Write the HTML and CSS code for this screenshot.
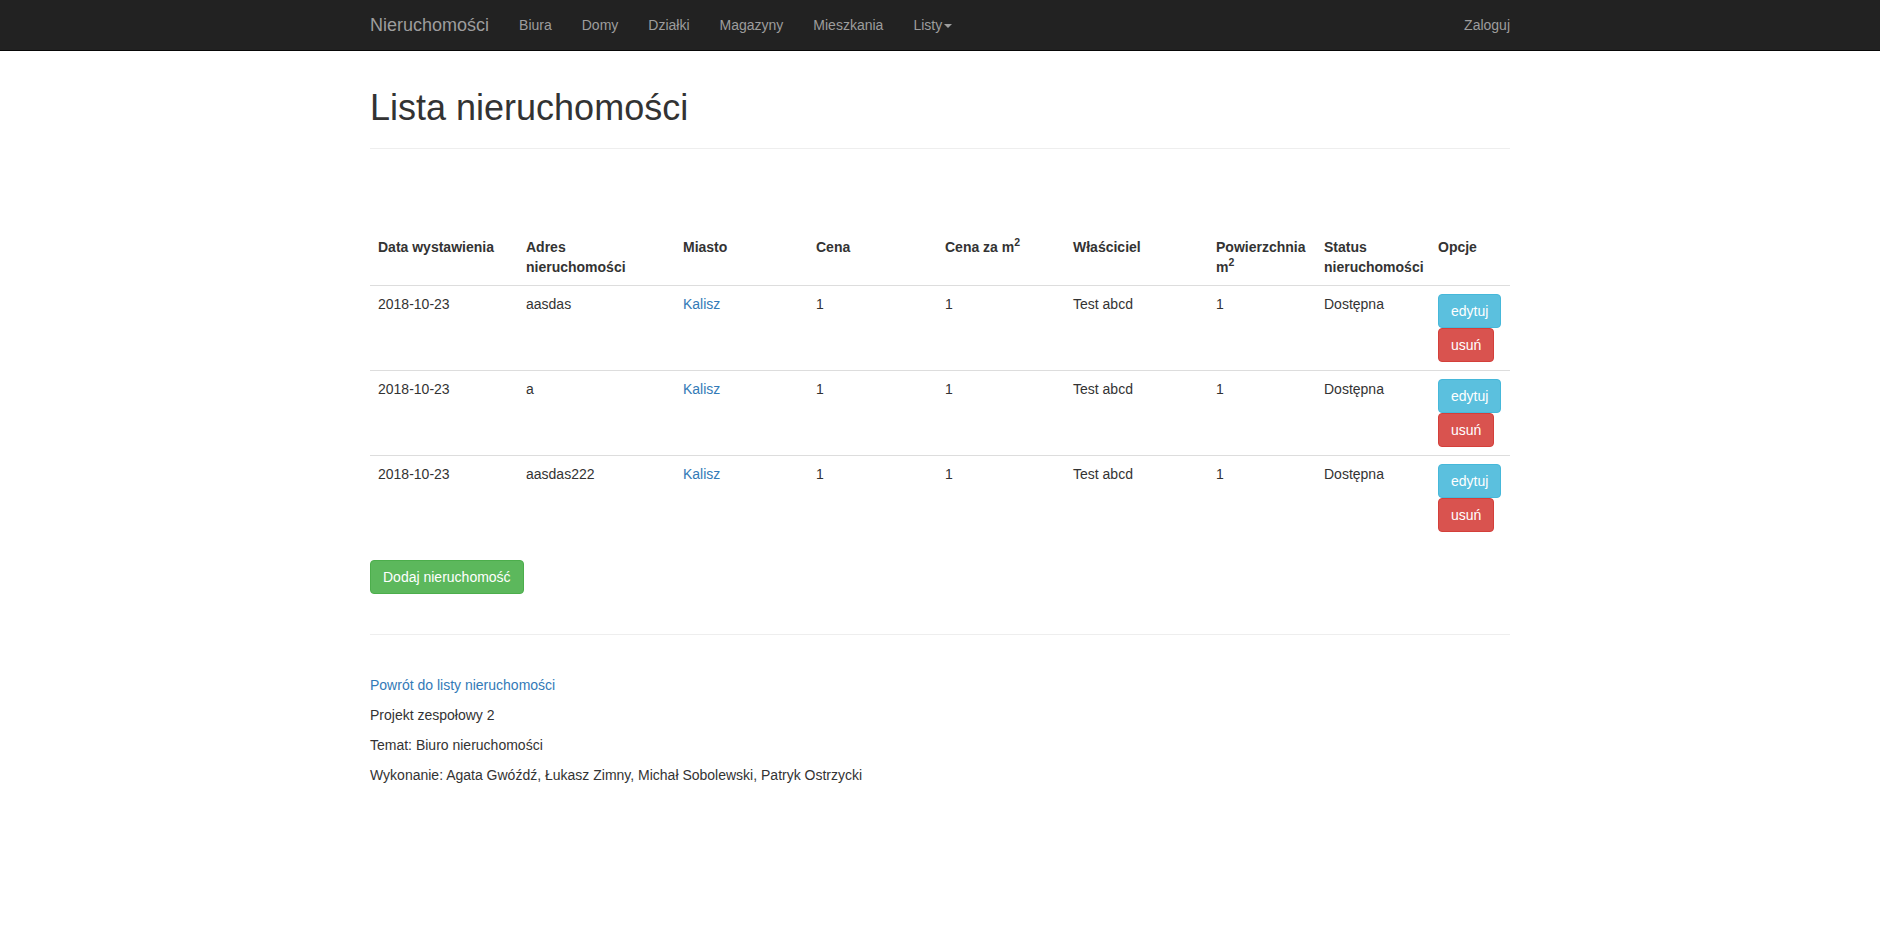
FILE: index.html
```html
<!DOCTYPE html>
<html lang="pl">
<head>
<meta charset="utf-8">
<title>Lista nieruchomości</title>
<link rel="stylesheet" href="styles.css">
</head>
<body>
<nav class="navbar">
  <div class="container nav-inner">
    <div class="nav-left">
      <a class="brand" href="#">Nieruchomości</a>
      <ul class="nav">
        <li><a href="#">Biura</a></li>
        <li><a href="#">Domy</a></li>
        <li><a href="#">Działki</a></li>
        <li><a href="#">Magazyny</a></li>
        <li><a href="#">Mieszkania</a></li>
        <li><a href="#">Listy<span class="caret"></span></a></li>
      </ul>
    </div>
    <ul class="nav nav-right">
      <li><a href="#">Zaloguj</a></li>
    </ul>
  </div>
</nav>

<main class="container body-content">
  <h1>Lista nieruchomości</h1>
  <hr class="rule">

  <table class="table">
    <colgroup>
      <col class="w-date"><col class="w-addr"><col class="w-city"><col class="w-price"><col class="w-pm2"><col class="w-owner"><col class="w-area"><col class="w-status"><col class="w-opts">
    </colgroup>
    <thead>
      <tr>
        <th>Data wystawienia</th>
        <th>Adres nieruchomości</th>
        <th>Miasto</th>
        <th>Cena</th>
        <th>Cena za m<sup>2</sup></th>
        <th>Właściciel</th>
        <th>Powierzchnia m<sup>2</sup></th>
        <th>Status nieruchomości</th>
        <th>Opcje</th>
      </tr>
    </thead>
    <tbody>
      <tr>
        <td>2018-10-23</td>
        <td>aasdas</td>
        <td><a href="#">Kalisz</a></td>
        <td>1</td>
        <td>1</td>
        <td>Test abcd</td>
        <td>1</td>
        <td>Dostępna</td>
        <td><div class="opts"><a class="btn btn-info" href="#">edytuj</a><a class="btn btn-danger" href="#">usuń</a></div></td>
      </tr>
      <tr>
        <td>2018-10-23</td>
        <td>a</td>
        <td><a href="#">Kalisz</a></td>
        <td>1</td>
        <td>1</td>
        <td>Test abcd</td>
        <td>1</td>
        <td>Dostępna</td>
        <td><div class="opts"><a class="btn btn-info" href="#">edytuj</a><a class="btn btn-danger" href="#">usuń</a></div></td>
      </tr>
      <tr>
        <td>2018-10-23</td>
        <td>aasdas222</td>
        <td><a href="#">Kalisz</a></td>
        <td>1</td>
        <td>1</td>
        <td>Test abcd</td>
        <td>1</td>
        <td>Dostępna</td>
        <td><div class="opts"><a class="btn btn-info" href="#">edytuj</a><a class="btn btn-danger" href="#">usuń</a></div></td>
      </tr>
    </tbody>
  </table>

  <div class="actions">
    <a class="btn btn-success" href="#">Dodaj nieruchomość</a>
  </div>

  <hr class="rule footer-rule">

  <footer class="footer">
    <p><a href="#">Powrót do listy nieruchomości</a></p>
    <p>Projekt zespołowy 2</p>
    <p>Temat: Biuro nieruchomości</p>
    <p>Wykonanie: Agata Gwóźdź, Łukasz Zimny, Michał Sobolewski, Patryk Ostrzycki</p>
  </footer>
</main>
</body>
</html>
```

FILE: styles.css
```css
* { box-sizing: border-box; }

html, body { margin: 0; padding: 0; }

body {
  font-family: "Liberation Sans", Arial, Helvetica, sans-serif;
  font-size: 14px;
  line-height: 1.42857143;
  color: #333;
  background: #fff;
}

a { color: #337ab7; text-decoration: none; }

.container {
  width: 1170px;
  margin: 0 auto;
  padding: 0 15px;
}

/* navbar */
.navbar {
  background: #222;
  border-bottom: 1px solid #080808;
  height: 51px;
}
.nav-inner {
  display: flex;
  justify-content: space-between;
  height: 50px;
}
.nav-left { display: flex; margin-left: -15px; }
.brand {
  display: block;
  padding: 15px;
  font-size: 18px;
  line-height: 20px;
  height: 50px;
  color: #9d9d9d;
}
.nav {
  display: flex;
  list-style: none;
  margin: 0;
  padding: 0;
}
.nav a {
  display: block;
  padding: 15px;
  line-height: 20px;
  color: #9d9d9d;
}
.nav-right { margin-right: -15px; }
.caret {
  display: inline-block;
  width: 0;
  height: 0;
  margin-left: 2px;
  vertical-align: middle;
  border-top: 4px solid #9d9d9d;
  border-right: 4px solid transparent;
  border-left: 4px solid transparent;
}

/* content */
.body-content { padding-top: 17px; }

h1 {
  font-size: 36px;
  font-weight: 500;
  line-height: 1.1;
  margin: 20px 0 10px;
  color: #333;
}

.rule {
  margin: 20px 0;
  border: 0;
  border-top: 1px solid #eee;
  height: 0;
}

.table {
  width: 100%;
  table-layout: fixed;
  border-collapse: collapse;
  border-spacing: 0;
  margin: 80px 0 20px;
}
.w-date { width: 148px; }
.w-addr { width: 157px; }
.w-city { width: 133px; }
.w-price { width: 129px; }
.w-pm2 { width: 128px; }
.w-owner { width: 143px; }
.w-area { width: 108px; }
.w-status { width: 114px; }
.w-opts { width: 80px; }

.table th,
.table td {
  padding: 8px;
  line-height: 20px;
  text-align: left;
  vertical-align: top;
}
.table th {
  font-weight: bold;
  border-bottom: 1px solid #ddd;
}
.table td { border-top: 1px solid #ddd; }
.table thead + tbody tr:first-child td { border-top: 0; }

sup {
  font-size: 75%;
  line-height: 0;
  position: relative;
  vertical-align: baseline;
  top: -0.5em;
}

.opts {
  display: flex;
  flex-direction: column;
  align-items: flex-start;
}

.btn {
  display: inline-block;
  padding: 6px 12px;
  font-size: 14px;
  line-height: 20px;
  border: 1px solid transparent;
  border-radius: 4px;
  color: #fff;
  white-space: nowrap;
}
.btn-info { background: #5bc0de; border-color: #46b8da; }
.btn-danger { background: #d9534f; border-color: #d43f3a; }
.btn-success { background: #5cb85c; border-color: #4cae4c; }

.actions { height: 34px; }

.footer-rule { margin: 40px 0 40px; }

.footer p { margin: 0 0 10px; }
```
